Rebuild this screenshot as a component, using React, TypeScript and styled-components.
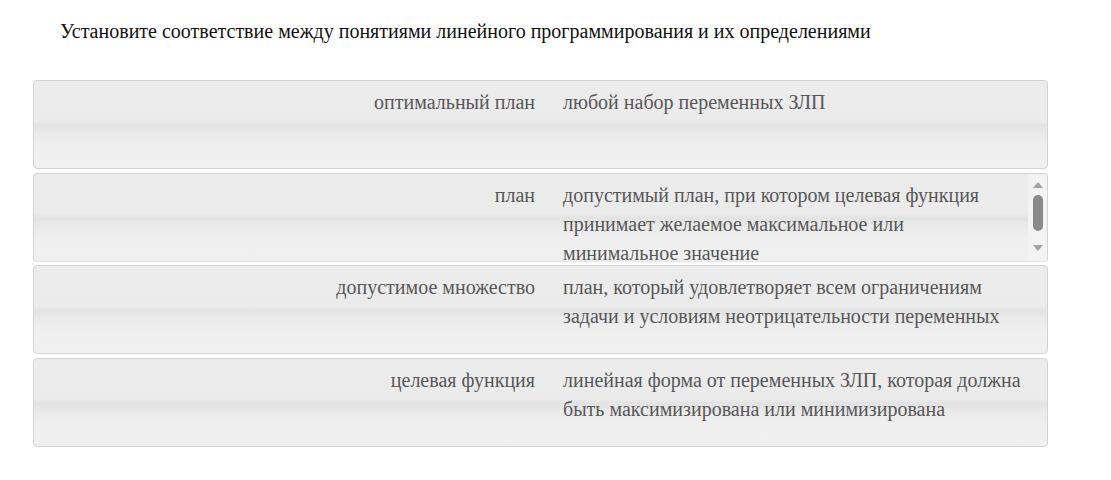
import * as React from 'react';
import styled, { createGlobalStyle } from 'styled-components';

const GlobalStyle = createGlobalStyle`
    body {
        margin: 0;
        background: #ffffff;
        font-family: "Liberation Serif", "Times New Roman", serif;
    }
`;

const pairs = [
    { term: 'оптимальный план', definition: 'любой набор переменных ЗЛП' },
    {
        term: 'план',
        definition: 'допустимый план, при котором целевая функция принимает желаемое максимальное или минимальное значение',
        scroll: true,
    },
    {
        term: 'допустимое множество',
        definition: 'план, который удовлетворяет всем ограничениям задачи и условиям неотрицательности переменных',
    },
    {
        term: 'целевая функция',
        definition: 'линейная форма от переменных ЗЛП, которая должна быть максимизирована или минимизирована',
    },
];

const Page = styled.div`
    padding: 19px 63px 0 33px;
    width: 1015px;
`;

const Question = styled.div`
    font-size: 20px;
    line-height: 24px;
    color: #111;
    padding-left: 27px;
    margin-bottom: 37px;
`;

const List = styled.div`
    display: flex;
    flex-direction: column;
    gap: 3.5px;
`;

const Card = styled.div<{ $scroll?: boolean }>`
    position: relative;
    display: grid;
    grid-template-columns: 501px 1fr;
    column-gap: 28px;
    height: 89px;
    box-sizing: border-box;
    padding: 7px ${p => (p.$scroll ? '40px' : '15px')} 0 0;
    border: 1px solid #d3d3d3;
    border-bottom-color: ${p => (p.$scroll ? '#e6e6e6' : '#d3d3d3')};
    border-radius: 4px;
    overflow: hidden;
    background: linear-gradient(
        to bottom,
        #ececec 0%,
        #ebebeb 46%,
        #e3e3e3 51%,
        #eaeaea 60%,
        #efefef 75%,
        #f0f0f0 100%
    );
    font-size: 20px;
    line-height: 29px;
    color: #575757;
`;

const Term = styled.div`
    text-align: right;
`;

const Definition = styled.div``;

// overlay scrollbar of the clipped card
const ScrollTrack = styled.div`
    position: absolute;
    top: 0;
    right: 0;
    bottom: 0;
    width: 19px;
    background: #f3f3f3;
    display: flex;
    flex-direction: column;
    align-items: center;
    padding-top: 6px;
    box-sizing: border-box;
`;

const Thumb = styled.div`
    width: 10px;
    height: 36px;
    margin-top: 6px;
    border-radius: 5px;
    background: #8a8a8a;
`;

const Arrow = ({ up }: { up?: boolean }) => (
    <svg width="12" height="9" viewBox="0 0 12 9" style={{ marginTop: up ? 0 : 13 }}>
        <path d={up ? 'M1 8 L6 2 L11 8 Z' : 'M1 1 L6 7 L11 1 Z'} fill="#a3a3a3" />
    </svg>
);

const App = () => (
    <Page>
        <GlobalStyle />
        <Question>Установите соответствие между понятиями линейного программирования и их определениями</Question>
        <List>
            {pairs.map((p, i) => (
                <Card key={i} $scroll={p.scroll}>
                    <Term>{p.term}</Term>
                    <Definition>{p.definition}</Definition>
                    {p.scroll && (
                        <ScrollTrack>
                            <Arrow up />
                            <Thumb />
                            <Arrow />
                        </ScrollTrack>
                    )}
                </Card>
            ))}
        </List>
    </Page>
);

export default App;
